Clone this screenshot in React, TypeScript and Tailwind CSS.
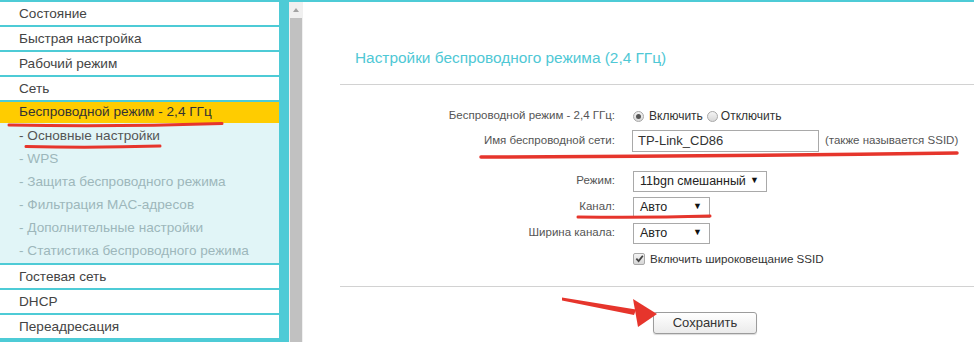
const menuTop = ["Состояние", "Быстрая настройка", "Рабочий режим", "Сеть"];
const subMenu = [
  "WPS",
  "Защита беспроводного режима",
  "Фильтрация MAC-адресов",
  "Дополнительные настройки",
  "Статистика беспроводного режима",
];
const menuBottom = ["Гостевая сеть", "DHCP", "Переадресация"];

const Row = ({ label }: { label: string }) => (
  <div className="flex h-[25px] shrink-0 items-center border-b-2 border-[#4ecbd6] bg-white pl-[19px] pt-[1px] text-[13.6px] text-[#444]">
    {label}
  </div>
);

const Select = ({ value, width }: { value: string; width: string }) => (
  <div
    className={`flex h-[21px] items-center justify-between border border-[#a9a9a9] bg-white pl-[6px] pr-[7px] text-[12.5px] text-[#222] ${width}`}
  >
    <span>{value}</span>
    <span className="text-[9px] text-[#111]">▼</span>
  </div>
);

const Label = ({ children }: { children: string }) => (
  <div className="w-[312px] shrink-0 text-right text-[11.5px] text-[#555]">{children}</div>
);

const Radio = ({ checked }: { checked?: boolean }) => (
  <span className="flex h-[11px] w-[11px] items-center justify-center rounded-full border border-[#a8a8a8] bg-gradient-to-b from-[#f4f4f4] to-[#d8d8d8]">
    {checked && <span className="h-[5px] w-[5px] rounded-full bg-[#555]" />}
  </span>
);

const App = () => {
  return (
    <div className="relative flex h-[342px] w-[974px] overflow-hidden bg-[#4ecbd6] pt-[2px] font-['Liberation_Sans',Arial,sans-serif]">
      {/* side menu */}
      <aside className="flex w-[279px] shrink-0 flex-col">
        {menuTop.map((m) => (
          <Row key={m} label={m} />
        ))}
        <div className="flex h-[21px] shrink-0 items-center bg-[#ffcc00] pl-[19px] text-[13.6px] text-[#333]">
          Беспроводной режим - 2,4 ГГц
        </div>
        <div className="flex h-[142px] shrink-0 flex-col border-b-2 border-[#4ecbd6] bg-[#e1f5f7] pt-[2px] text-[13.6px]">
          <div className="flex flex-1 items-center pl-[19px] text-[#555]">- Основные настройки</div>
          {subMenu.map((s) => (
            <div key={s} className="flex flex-1 items-center pl-[19px] text-[#9db7bb]">
              - {s}
            </div>
          ))}
        </div>
        {menuBottom.map((m) => (
          <Row key={m} label={m} />
        ))}
      </aside>

      {/* scrollbar */}
      <div className="ml-[10px] flex w-[14px] shrink-0 flex-col bg-[#f0f0f0]">
        <div className="flex h-[16px] items-center justify-center">
          <span className="h-0 w-0 border-x-[3px] border-b-[4px] border-x-transparent border-b-[#a3a3a3]" />
        </div>
        <div className="mx-[1px] flex-1 bg-[#c1c1c1]" />
      </div>

      {/* content */}
      <main className="flex flex-1 flex-col bg-white">
        <div className="h-[82px] pl-[52px] pt-[46px] text-[15.4px] leading-[20px] text-[#4fc8d5]">
          Настройки беспроводного режима (2,4 ГГц)
        </div>
        <div className="ml-[37px] h-px bg-[#d2d2d2]" />

        <div className="flex flex-col pt-[19px]">
          <div className="flex h-[24px] items-center">
            <Label>Беспроводной режим - 2,4 ГГц:</Label>
            <div className="ml-[18px] flex items-center text-[12px] text-[#333]">
              <Radio checked />
              <span className="ml-[5px]">Включить</span>
              <span className="ml-[4px]">
                <Radio />
              </span>
              <span className="ml-[3px]">Отключить</span>
            </div>
          </div>
          <div className="flex h-[26px] items-center">
            <Label>Имя беспроводной сети:</Label>
            <div className="ml-[17px] flex h-[22px] w-[187px] items-center border border-[#a9a9a9] pl-[5px] text-[13px] text-[#333]">
              TP-Link_CD86
            </div>
            <span className="ml-[6px] text-[11.5px] text-[#555]">(также называется SSID)</span>
          </div>

          <div className="mt-[14px] flex h-[26px] items-center">
            <Label>Режим:</Label>
            <div className="ml-[18px]">
              <Select value="11bgn смешанный" width="w-[134px]" />
            </div>
          </div>
          <div className="flex h-[26px] items-center">
            <Label>Канал:</Label>
            <div className="ml-[18px]">
              <Select value="Авто" width="w-[77px]" />
            </div>
          </div>
          <div className="flex h-[26px] items-center">
            <Label>Ширина канала:</Label>
            <div className="ml-[18px]">
              <Select value="Авто" width="w-[77px]" />
            </div>
          </div>
          <div className="flex h-[26px] items-center">
            <div className="w-[312px] shrink-0" />
            <div className="ml-[18px] flex items-center text-[11.6px] text-[#333]">
              <span className="flex h-[12px] w-[12px] items-center justify-center rounded-[2px] border border-[#a8a8a8] bg-gradient-to-b from-[#f4f4f4] to-[#d6d6d6]">
                <svg width="9" height="9" viewBox="0 0 10 10">
                  <path d="M1.5 5.2 L4 7.8 L8.7 2" fill="none" stroke="#444" strokeWidth="2" />
                </svg>
              </span>
              <span className="ml-[5px]">Включить широковещание SSID</span>
            </div>
          </div>
        </div>

        <div className="ml-[37px] mt-[14px] h-px bg-[#d2d2d2]" />
        <div className="pl-[350px] pt-[23px]">
          <button className="h-[22px] w-[104px] rounded-[3px] border border-[#9c9c9c] bg-gradient-to-b from-white to-[#ebebeb] text-[13px] text-[#333] shadow-[0_1px_1px_rgba(0,0,0,0.15)]">
            Сохранить
          </button>
        </div>
      </main>

      {/* red annotation marks */}
      <svg className="pointer-events-none absolute left-0 top-0" width="974" height="342" viewBox="0 0 974 342">
        <g fill="none" stroke="#e6352c" strokeLinecap="round">
          <path d="M9 125 Q115 127 222 123.5" strokeWidth="3" />
          <path d="M26 146.5 Q95 148 160 146" strokeWidth="3" />
          <path d="M481 157 Q720 156.5 957 153" strokeWidth="3.5" />
          <path d="M578 217 Q645 218 710 216" strokeWidth="3" />
        </g>
        <g fill="#e6352c">
          <polygon points="562,297.5 636,309.5 634,315 562,300.5" />
          <polygon points="633,299 657,314 638,327" />
        </g>
      </svg>
    </div>
  );
};

export default App;
